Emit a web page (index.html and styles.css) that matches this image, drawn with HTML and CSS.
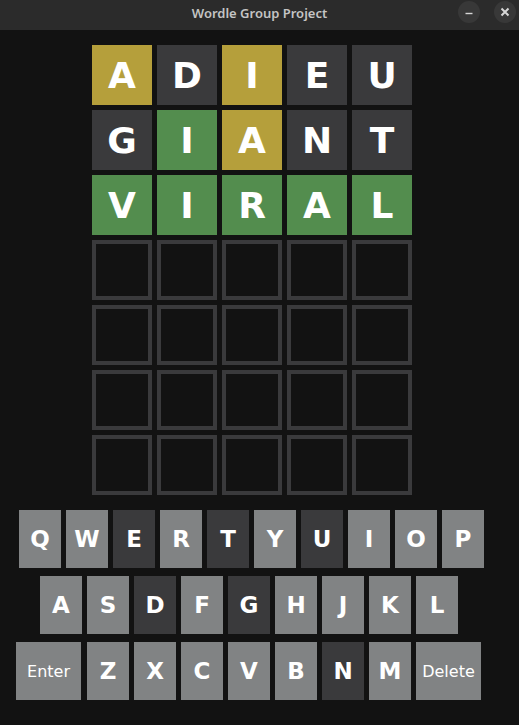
FILE: index.html
```html
<!DOCTYPE html>
<html lang="en">
<head>
<meta charset="utf-8">
<title>Wordle Group Project</title>
<link rel="stylesheet" href="styles.css">
</head>
<body>
<header class="titlebar">
  <span class="title">Wordle Group Project</span>
  <div class="win-controls">
    <span class="win-btn">
      <svg width="10" height="10" viewBox="0 0 10 10"><path d="M1.5 6.5h7" stroke="#d6d6d6" stroke-width="1.4" fill="none"/></svg>
    </span>
    <span class="win-btn">
      <svg width="10" height="10" viewBox="0 0 10 10"><path d="M1.5 1.5l7 7M8.5 1.5l-7 7" stroke="#d6d6d6" stroke-width="2" fill="none"/></svg>
    </span>
  </div>
</header>

<main class="board">
  <div class="tile present">A</div>
  <div class="tile absent">D</div>
  <div class="tile present">I</div>
  <div class="tile absent">E</div>
  <div class="tile absent">U</div>

  <div class="tile absent">G</div>
  <div class="tile correct">I</div>
  <div class="tile present">A</div>
  <div class="tile absent">N</div>
  <div class="tile absent">T</div>

  <div class="tile correct">V</div>
  <div class="tile correct">I</div>
  <div class="tile correct">R</div>
  <div class="tile correct">A</div>
  <div class="tile correct">L</div>

  <div class="tile empty"></div><div class="tile empty"></div><div class="tile empty"></div><div class="tile empty"></div><div class="tile empty"></div>
  <div class="tile empty"></div><div class="tile empty"></div><div class="tile empty"></div><div class="tile empty"></div><div class="tile empty"></div>
  <div class="tile empty"></div><div class="tile empty"></div><div class="tile empty"></div><div class="tile empty"></div><div class="tile empty"></div>
  <div class="tile empty"></div><div class="tile empty"></div><div class="tile empty"></div><div class="tile empty"></div><div class="tile empty"></div>
</main>

<section class="keyboard">
  <div class="kb-row row1">
    <div class="key">Q</div>
    <div class="key">W</div>
    <div class="key used">E</div>
    <div class="key">R</div>
    <div class="key used">T</div>
    <div class="key">Y</div>
    <div class="key used">U</div>
    <div class="key">I</div>
    <div class="key">O</div>
    <div class="key">P</div>
  </div>
  <div class="kb-row row2">
    <div class="key">A</div>
    <div class="key">S</div>
    <div class="key used">D</div>
    <div class="key">F</div>
    <div class="key used">G</div>
    <div class="key">H</div>
    <div class="key">J</div>
    <div class="key">K</div>
    <div class="key">L</div>
  </div>
  <div class="kb-row row3">
    <div class="key wide enter">Enter</div>
    <div class="key">Z</div>
    <div class="key">X</div>
    <div class="key">C</div>
    <div class="key">V</div>
    <div class="key">B</div>
    <div class="key used">N</div>
    <div class="key">M</div>
    <div class="key wide">Delete</div>
  </div>
</section>
</body>
</html>
```

FILE: styles.css
```css
html, body {
  margin: 0;
  padding: 0;
  background: #121212;
  height: 100%;
}

body {
  font-family: "DejaVu Sans", Verdana, sans-serif;
  color: #ffffff;
  overflow: hidden;
}

.titlebar {
  height: 30px;
  background: #2b2b2b;
  display: flex;
  align-items: center;
  justify-content: center;
  position: relative;
}

.title {
  font-family: "Noto Sans", "DejaVu Sans", sans-serif;
  font-weight: 600;
  font-size: 13px;
  color: #c4c4c4;
  margin-top: -4px;
}

.win-controls {
  position: absolute;
  right: 3px;
  top: 1px;
  display: flex;
  gap: 14px;
}

.win-btn {
  width: 22px;
  height: 22px;
  border-radius: 50%;
  background: #383838;
  display: flex;
  align-items: center;
  justify-content: center;
}

.board {
  display: grid;
  grid-template-columns: repeat(5, 60px);
  grid-auto-rows: 60px;
  gap: 5px;
  margin: 15px 0 0 92px;
  width: max-content;
}

.tile {
  box-sizing: border-box;
  display: flex;
  align-items: center;
  justify-content: center;
  font-weight: bold;
  font-size: 36px;
  color: #ffffff;
}

.present { background: #b59f3b; }
.correct { background: #538d4e; }
.absent  { background: #3a3a3c; }
.empty   { border: 4px solid #3a3a3c; background: #121212; }

.keyboard {
  margin-top: 15px;
  display: flex;
  flex-direction: column;
  gap: 8px;
}

.kb-row {
  display: flex;
  gap: 5px;
}

.row1 { padding-left: 19px; }
.row2 { padding-left: 40px; }
.row3 { padding-left: 16px; }

.key {
  width: 42px;
  height: 58px;
  background: #818384;
  display: flex;
  align-items: center;
  justify-content: center;
  font-weight: bold;
  font-size: 23px;
  color: #ffffff;
}

.key.used { background: #3a3a3c; }

.key.wide {
  width: 65px;
  font-weight: normal;
  font-size: 16px;
}

.key.enter { margin-right: 1px; }
```
